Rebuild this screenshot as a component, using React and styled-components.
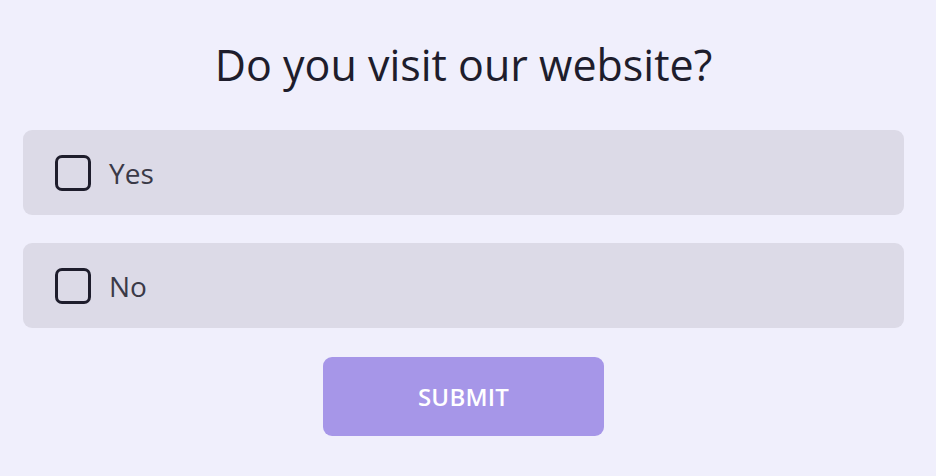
import React from "react";
import styled, { createGlobalStyle } from "styled-components";

const Global = createGlobalStyle`
  html, body { margin: 0; padding: 0; background: #f0effc; }
  body { font-family: "Open Sans", "Noto Sans", sans-serif; }
`;

const Page = styled.div`
  width: 936px;
  height: 476px;
  box-sizing: border-box;
  padding: 34px 32px 0 23px;
  display: flex;
  flex-direction: column;
  align-items: stretch;
`;

const Title = styled.h1`
  margin: 0 0 34px;
  text-align: center;
  font-size: 43px;
  line-height: 62px;
  font-weight: 400;
  color: #1e1d2c;
`;

const Options = styled.div`
  display: flex;
  flex-direction: column;
  gap: 28px;
`;

const Option = styled.label`
  display: flex;
  align-items: center;
  gap: 18px;
  height: 85px;
  padding-left: 32px;
  box-sizing: border-box;
  background: #dcdae7;
  border-radius: 9px;
  cursor: pointer;
`;

const Box = styled.span`
  width: 36px;
  height: 36px;
  box-sizing: border-box;
  border: 3px solid #1e1d2c;
  border-radius: 7px;
`;

const Label = styled.span`
  font-size: 28px;
  color: #3a3947;
`;

const ButtonRow = styled.div`
  display: flex;
  justify-content: center;
  margin-top: 29px;
`;

const Submit = styled.button`
  width: 281px;
  height: 79px;
  border: none;
  border-radius: 9px;
  background: #a696e8;
  color: #ffffff;
  font-family: "Open Sans", sans-serif;
  font-size: 24px;
  font-weight: 600;
  letter-spacing: 0.2px;
`;

export default function App() {
  return (
    <Page>
      <Global />
      <Title>Do you visit our website?</Title>
      <Options>
        <Option>
          <Box />
          <Label>Yes</Label>
        </Option>
        <Option>
          <Box />
          <Label>No</Label>
        </Option>
      </Options>
      <ButtonRow>
        <Submit>SUBMIT</Submit>
      </ButtonRow>
    </Page>
  );
}
